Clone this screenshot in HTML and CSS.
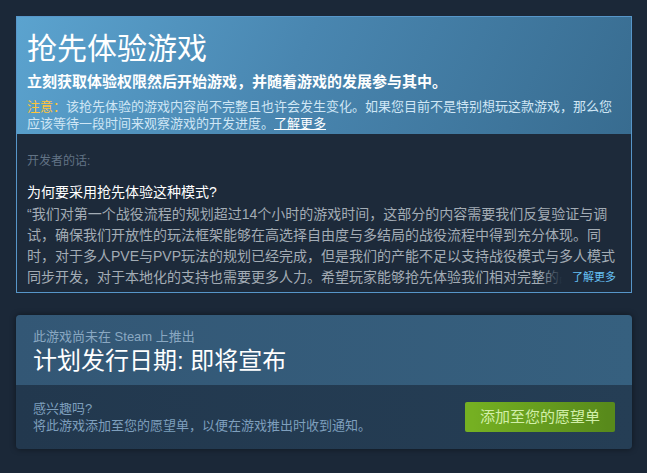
FILE: index.html
```html
<!DOCTYPE html>
<html lang="zh-CN">
<head>
<meta charset="utf-8">
<title>抢先体验游戏</title>
<link rel="stylesheet" href="styles.css">
</head>
<body>
<div class="page">
  <section class="ea-box">
    <div class="ea-header">
      <h1 class="ea-title">抢先体验游戏</h1>
      <p class="ea-sub">立刻获取体验权限然后开始游戏，并随着游戏的发展参与其中。</p>
      <p class="ea-notice"><span class="ea-warn">注意：</span>该抢先体验的游戏内容尚不完整且也许会发生变化。如果您目前不是特别想玩这款游戏，那么您应该等待一段时间来观察游戏的开发进度。<a class="ea-learn" href="#">了解更多</a></p>
    </div>
    <div class="ea-dev">
      <div class="dev-label">开发者的话:</div>
      <h2 class="dev-q">为何要采用抢先体验这种模式?</h2>
      <div class="dev-body">
        <p class="dev-text">“我们对第一个战役流程的规划超过14个小时的游戏时间，这部分的内容需要我们反复验证与调试，确保我们开放性的玩法框架能够在高选择自由度与多结局的战役流程中得到充分体现。同时，对于多人PVE与PVP玩法的规划已经完成，但是我们的产能不足以支持战役模式与多人模式同步开发，对于本地化的支持也需要更多人力。希望玩家能够抢先体验我们相对完整的战役内容，并给予我们宝贵的反馈。”</p>
        <div class="dev-more"><a href="#">了解更多</a></div>
      </div>
    </div>
  </section>

  <section class="cs-box">
    <div class="cs-top">
      <div class="cs-note">此游戏尚未在 Steam 上推出</div>
      <div class="cs-date">计划发行日期: 即将宣布</div>
    </div>
    <div class="cs-bottom">
      <div class="cs-text">
        <div>感兴趣吗?</div>
        <div>将此游戏添加至您的愿望单，以便在游戏推出时收到通知。</div>
      </div>
      <a class="cs-btn" href="#">添加至您的愿望单</a>
    </div>
  </section>
</div>
</body>
</html>
```

FILE: styles.css
```css
* { box-sizing: border-box; }
html, body { margin: 0; padding: 0; }
body {
  background: #1b2838;
  font-family: "Liberation Sans", "Noto Sans CJK SC", sans-serif;
  width: 647px;
  height: 473px;
  overflow: hidden;
}
.page {
  padding: 16px 15px 0 16px;
}
a { text-decoration: none; }

.ea-box {
  border: 1px solid #5796c9;
}
.ea-header {
  background: linear-gradient(115deg, #5ba3cf 0%, #4986b0 45%, #386c90 100%);
  padding: 14px 10px 2px 10px;
}
.ea-title {
  margin: 0;
  font-size: 30px;
  line-height: 36px;
  font-weight: normal;
  color: #ffffff;
}
.ea-sub {
  margin: 5px 0 0 0;
  font-size: 15px;
  line-height: 20px;
  font-weight: bold;
  color: #ffffff;
}
.ea-notice {
  margin: 6px 0 0 0;
  font-size: 13px;
  line-height: 17px;
  color: #cfe6f5;
}
.ea-warn { color: #ffc43a; }
.ea-learn {
  color: #ffffff;
  text-decoration: underline;
}

.ea-dev {
  background: #1d2a3a;
  padding: 19px 10px 4px 10px;
}
.dev-label {
  font-size: 12px;
  line-height: 16px;
  color: #627385;
}
.dev-q {
  margin: 13px 0 0 0;
  font-size: 14px;
  line-height: 20px;
  font-weight: normal;
  color: #ffffff;
}
.dev-body {
  position: relative;
  margin-top: 2px;
  height: 84px;
  overflow: hidden;
}
.dev-text {
  margin: 0;
  font-size: 14px;
  line-height: 21px;
  color: #a3acb5;
}
.dev-more {
  position: absolute;
  right: 0;
  bottom: 0;
  height: 21px;
  padding-left: 32px;
  padding-right: 5px;
  background: linear-gradient(to right, rgba(29,42,58,0) 0, #1d2a3a 22px);
  font-size: 11px;
  line-height: 21px;
}
.dev-more a { color: #66c0f4; }

.cs-box {
  margin-top: 22px;
  border-radius: 4px;
  overflow: hidden;
  box-shadow: 0 0 6px rgba(0,0,0,0.45);
}
.cs-top {
  background: linear-gradient(to right, #335775, #36607f);
  padding: 13px 17px 9px 17px;
}
.cs-note {
  font-size: 13px;
  line-height: 18px;
  color: #8aa8c2;
}
.cs-date {
  font-size: 24px;
  line-height: 30px;
  color: #ffffff;
}
.cs-bottom {
  background: linear-gradient(to right, #22384e, #253e55);
  height: 64px;
  padding: 0 17px;
  display: flex;
  align-items: center;
  justify-content: space-between;
}
.cs-text {
  font-size: 13px;
  line-height: 17px;
  color: #7e9fbd;
}
.cs-btn {
  width: 150px;
  height: 30px;
  border-radius: 2px;
  background: linear-gradient(to right, #75b022 5%, #588a1b 95%);
  color: #d2efa9;
  font-size: 15px;
  line-height: 30px;
  text-align: center;
}
```
